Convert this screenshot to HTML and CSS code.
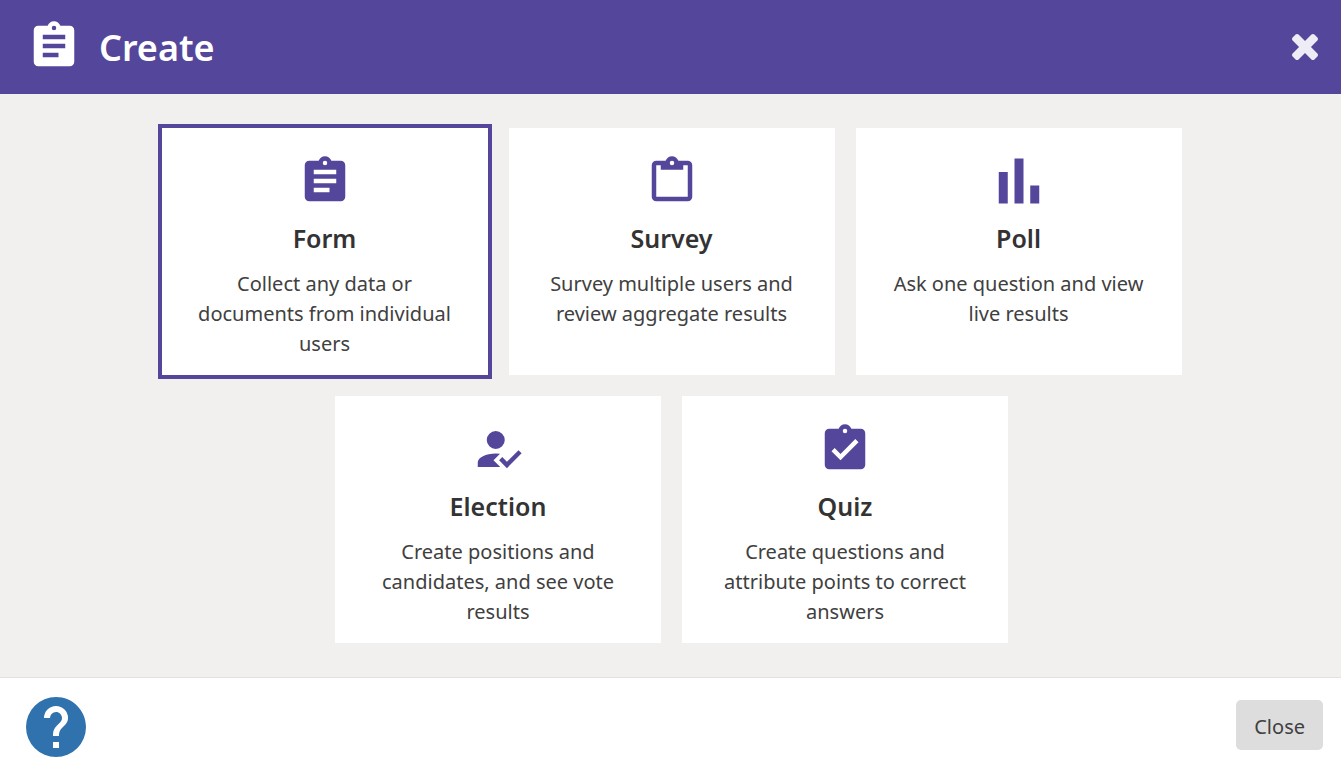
FILE: index.html
```html
<!DOCTYPE html>
<html lang="en">

<head>
    <meta charset="UTF-8">
    <meta name="viewport" content="width=device-width, initial-scale=1.0">
    <title>Create</title>
    <link rel="stylesheet" href="styles.css">
</head>

<body>
    <header class="header">
        <svg class="icon" viewBox="0 0 24 24" aria-hidden="true">
            <path d="M17,9H7V7H17M17,13H7V11H17M14,17H7V15H14M12,3A1,1 0 0,1 13,4A1,1 0 0,1 12,5A1,1 0 0,1 11,4A1,1 0 0,1 12,3M19,3H14.82C14.4,1.84 13.3,1 12,1C10.7,1 9.6,1.84 9.18,3H5A2,2 0 0,0 3,5V19A2,2 0 0,0 5,21H19A2,2 0 0,0 21,19V5A2,2 0 0,0 19,3Z" />
        </svg>
        <h1>Create</h1>
        <button type="button" class="dismiss" aria-label="Close dialog">
            <svg viewBox="110 366 1188 1188" aria-hidden="true">
                <path d="M1298 1322q0 40-28 68l-136 136q-28 28-68 28t-68-28l-294-294-294 294q-28 28-68 28t-68-28l-136-136q-28-28-28-68t28-68l294-294-294-294q-28-28-28-68t28-68l136-136q28-28 68-28t68 28l294 294 294-294q28-28 68-28t68 28l136 136q28 28 28 68t-28 68l-294 294 294 294q28 28 28 68z" />
            </svg>
        </button>
    </header>

    <main class="options">
        <button type="button" class="card selected">
            <svg class="icon" viewBox="0 0 24 24" aria-hidden="true">
                <path d="M17,9H7V7H17M17,13H7V11H17M14,17H7V15H14M12,3A1,1 0 0,1 13,4A1,1 0 0,1 12,5A1,1 0 0,1 11,4A1,1 0 0,1 12,3M19,3H14.82C14.4,1.84 13.3,1 12,1C10.7,1 9.6,1.84 9.18,3H5A2,2 0 0,0 3,5V19A2,2 0 0,0 5,21H19A2,2 0 0,0 21,19V5A2,2 0 0,0 19,3Z" />
            </svg>
            <span class="card-title">Form</span>
            <span class="card-text">Collect any data or documents from individual users</span>
        </button>
        <button type="button" class="card">
            <svg class="icon" viewBox="0 0 24 24" aria-hidden="true">
                <path d="M12,3A1,1 0 0,1 13,4A1,1 0 0,1 12,5A1,1 0 0,1 11,4A1,1 0 0,1 12,3M7,7H17V5H19V19H5V5H7V7M19,3H14.82C14.4,1.84 13.3,1 12,1C10.7,1 9.6,1.84 9.18,3H5A2,2 0 0,0 3,5V19A2,2 0 0,0 5,21H19A2,2 0 0,0 21,19V5A2,2 0 0,0 19,3Z" />
            </svg>
            <span class="card-title">Survey</span>
            <span class="card-text">Survey multiple users and review aggregate results</span>
        </button>
        <button type="button" class="card">
            <svg class="icon" viewBox="0 0 24 24" aria-hidden="true">
                <path d="M3,22V8H7V22H3M10,22V2H14V22H10M17,22V14H21V22H17Z" />
            </svg>
            <span class="card-title">Poll</span>
            <span class="card-text">Ask one question and view live results</span>
        </button>
        <button type="button" class="card">
            <svg class="icon" viewBox="0 0 24 24" aria-hidden="true">
                <path d="M21.1,12.5L22.5,13.91L15.97,20.5L12.5,17L13.9,15.59L15.97,17.67L21.1,12.5M10,17L13,20H3V18C3,15.79 6.58,14 11,14L12.89,14.11L10,17M11,4A4,4 0 0,1 15,8A4,4 0 0,1 11,12A4,4 0 0,1 7,8A4,4 0 0,1 11,4Z" />
            </svg>
            <span class="card-title">Election</span>
            <span class="card-text">Create positions and candidates, and see vote results</span>
        </button>
        <button type="button" class="card">
            <svg class="icon" viewBox="0 0 24 24" aria-hidden="true">
                <path d="M10,17L6,13L7.41,11.59L10,14.17L16.59,7.58L18,9M12,3A1,1 0 0,1 13,4A1,1 0 0,1 12,5A1,1 0 0,1 11,4A1,1 0 0,1 12,3M19,3H14.82C14.4,1.84 13.3,1 12,1C10.7,1 9.6,1.84 9.18,3H5A2,2 0 0,0 3,5V19A2,2 0 0,0 5,21H19A2,2 0 0,0 21,19V5A2,2 0 0,0 19,3Z" />
            </svg>
            <span class="card-title">Quiz</span>
            <span class="card-text">Create questions and attribute points to correct answers</span>
        </button>
    </main>

    <footer class="footer">
        <button type="button" class="help" aria-label="Help">
            <svg viewBox="2 2 20 20" aria-hidden="true">
                <path d="M15.07,11.25L14.17,12.17C13.45,12.89 13,13.5 13,15H11V14.5C11,13.39 11.45,12.39 12.17,11.67L13.41,10.41C13.78,10.05 14,9.55 14,9C14,7.89 13.1,7 12,7A2,2 0 0,0 10,9H8A4,4 0 0,1 12,5A4,4 0 0,1 16,9C16,9.88 15.64,10.67 15.07,11.25M13,19H11V17H13M12,2A10,10 0 0,0 2,12A10,10 0 0,0 12,22A10,10 0 0,0 22,12C22,6.47 17.5,2 12,2Z" />
            </svg>
        </button>
        <button type="button" class="close">Close</button>
    </footer>
</body>

</html>
```
FILE: styles.css
```css
* {
    margin: 0;
    padding: 0;
    box-sizing: border-box;
}

body {
    display: flex;
    flex-direction: column;
    min-height: 100vh;
    font-family: "Segoe UI", "Noto Sans", sans-serif;
    font-size: 20px;
    line-height: 30px;
    color: #404040;
    background: #fff;
}

button {
    border: none;
    background: none;
    font: inherit;
    color: inherit;
    cursor: pointer;
}

svg {
    display: block;
    fill: currentColor;
}

.icon {
    width: 54px;
    height: 54px;
}

/* header */
.header {
    display: flex;
    align-items: center;
    padding: 19px 23px 21px 27px;
    color: #fff;
    background: #54469b;
}

.header h1 {
    margin-left: 18px;
    padding-top: 4px;
    font-size: 36px;
    font-weight: 600;
    line-height: 50px;
}

.dismiss {
    margin-left: auto;
    padding-top: 2px;
    color: #eeecf5;
}

.dismiss svg {
    width: 26px;
    height: 26px;
}

/* cards */
.options {
    flex: 1;
    display: flex;
    flex-wrap: wrap;
    justify-content: center;
    align-content: flex-start;
    gap: 21px;
    padding: 34px 158px 32px 160px;
    background: #f1f0ee;
}

.card {
    display: flex;
    flex-direction: column;
    align-items: center;
    width: 326px;
    padding: 26px 32px 16px;
    background: #fff;
}

.card .icon {
    color: #54469b;
}

.card-title {
    margin: 10px 0 11px;
    font-size: 25px;
    font-weight: 600;
    line-height: 40px;
    color: #333;
}

.selected {
    outline: 4px solid #54469b;
}

/* footer */
.footer {
    display: flex;
    justify-content: space-between;
    align-items: center;
    padding: 15px 18px 12px 26px;
    border-top: 1px solid #e1e1e1;
}

.help {
    padding: 4px 0 0;
    color: #3072ad;
}

.help svg {
    width: 60px;
    height: 60px;
}

.close {
    padding: 12px 18px 8px;
    border-radius: 5px;
    background: #ddd;
}
```
